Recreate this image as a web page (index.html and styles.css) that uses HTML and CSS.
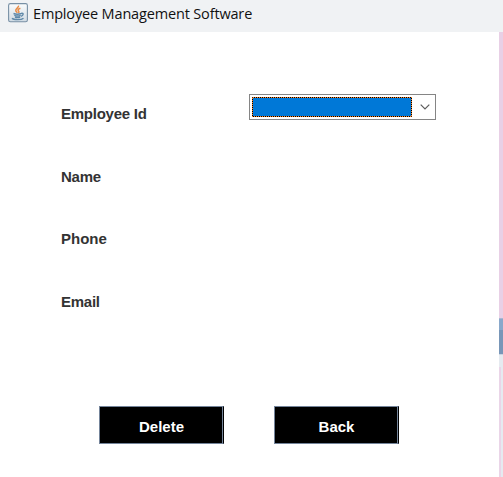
FILE: index.html
```html
<!DOCTYPE html>
<html lang="en">
<head>
<meta charset="utf-8">
<title>Employee Management Software</title>
<link rel="stylesheet" href="styles.css">
</head>
<body>
<header class="titlebar">
  <svg class="app-icon" width="20" height="20" viewBox="0 0 20 20">
    <defs><linearGradient id="face" x1="0" y1="0" x2="0" y2="1"><stop offset="0" stop-color="#fcfdfd"/><stop offset="1" stop-color="#cfdae3"/></linearGradient></defs>
    <rect x=".6" y=".6" width="18.8" height="18.2" rx="1.8" fill="url(#face)" stroke="#7890a5" stroke-width="1.1"/>
    <path d="M10.4 2.7c1 1.8-3.2 3-2.6 5 .2.8 1.1 1.4 1.6 2.1M12.4 5.3c-2.4.8-3 1.9-1.7 3 .6.6.2 1.2-.3 1.7" fill="none" stroke="#e88b45" stroke-width="1.5"/>
    <path d="M5.500 10.500c2 .8 5.700 .8 7.800 0M6.300 12.300c1.700.7 4.800.7 6.400 0M7 14.100c1.500.6 3.700.6 5.200 0M13.200 10.400c2.700-.6 2.500 2-.2 2.900M4 15.300c1.700 1.800 9.300 1.800 11.500-.1" fill="none" stroke="#5f88a8" stroke-width="1.4"/>
  </svg>
  <span class="title">Employee Management Software</span>
</header>
<div class="window">
  <main class="content">
    <div class="form">
      <span class="label">Employee Id</span>
      <div class="combo">
        <svg class="selection" width="160" height="20">
          <rect width="160" height="20" fill="#0078d7"/>
          <rect x=".5" y=".5" width="159" height="19" fill="none" stroke="#ff8728"/>
          <rect x=".5" y=".5" width="159" height="19" fill="none" stroke="#000" stroke-dasharray="1 1" stroke-dashoffset=".5"/>
        </svg>
        <svg class="chevron" width="10" height="6" viewBox="0 0 10 6"><path d="M.7.7 5 5 9.300.7" fill="none" stroke="#5c5c5c" stroke-width="1.200"/></svg>
      </div>
      <span class="label">Name</span><span></span>
      <span class="label wide">Phone</span><span></span>
      <span class="label">Email</span><span></span>
    </div>
    <div class="actions">
      <button class="button">Delete</button>
      <button class="button">Back</button>
    </div>
  </main>
  <aside class="backdrop">
    <div class="pink"></div>
    <div class="sky"></div>
    <div class="steel"></div>
    <div class="mist"></div>
    <div class="edge"></div>
  </aside>
</div>
</body>
</html>
```
FILE: styles.css
```css
* { box-sizing: border-box; }
body {
  margin: 0;
  width: 503px;
  height: 477px;
  overflow: hidden;
  background: #fff;
  font-family: "Liberation Sans", Arial, sans-serif;
}
.titlebar {
  display: flex;
  height: 32px;
  padding: 3px 0 0 8px;
  gap: 5px;
  background: #f0f2f4;
}
.title {
  font: 14.5px/21px "Open Sans", sans-serif;
  letter-spacing: -0.16px;
  color: #111;
  white-space: nowrap;
}
.window { display: flex; height: 445px; }
.content { width: 499px; }
.form {
  display: grid;
  grid-template-columns: 188px 187px;
  grid-template-rows: repeat(4, 62.5px);
  padding: 62px 0 0 61px;
}
.label {
  padding-top: 11px;
  font-size: 15px;
  line-height: 18px;
  font-weight: bold;
  letter-spacing: -0.25px;
  color: #333;
}
.wide { letter-spacing: 0; }
.combo {
  display: flex;
  align-items: center;
  width: 187px;
  height: 26px;
  padding-left: 2px;
  border: 1px solid #858585;
}
.chevron { margin-left: 8px; }
.actions {
  display: flex;
  gap: 50px;
  padding: 62px 0 0 99px;
}
.button {
  width: 125px;
  height: 38px;
  padding: 3px 0 0;
  border: 1px solid #74849a;
  border-right-color: #000;
  border-radius: 0;
  background: #000;
  box-shadow: inset -1px 0 #74849a;
  color: #fff;
  font: bold 15px/18px "Liberation Sans", Arial, sans-serif;
}
.backdrop { width: 4px; }
.pink { height: 286px; background: #e8d0e6; }
.sky { height: 12px; background: #89a8cb; border-top: 1px solid #aab6d2; }
.steel { height: 24px; background: #7896b8; }
.mist { height: 13px; background: #e5eaf0; border-top: 1px solid #c9d4e2; }
.edge { height: 110px; background: #e5eaf0; border-left: 2px solid #ead5e8; }
```
